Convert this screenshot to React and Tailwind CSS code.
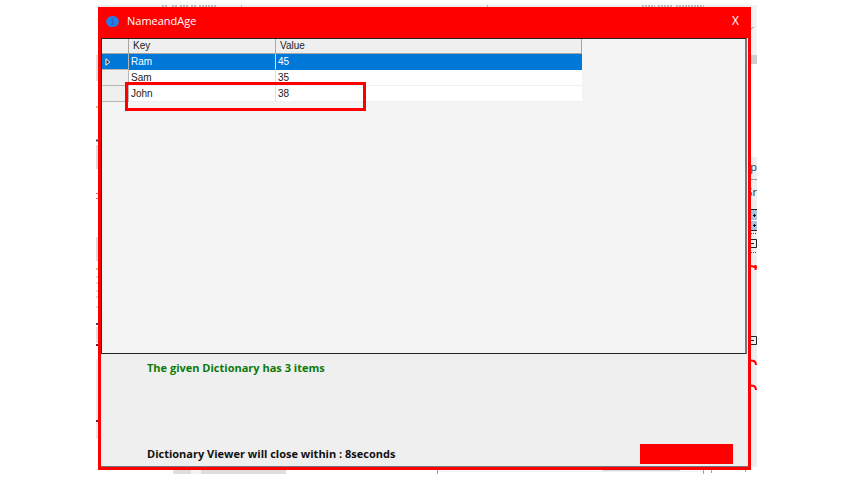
const ENTRIES = [
  { key: 'Ram', value: 45 },
  { key: 'Sam', value: 35 },
  { key: 'John', value: 38 },
]

const SELECTED_KEY = 'Ram'
const SECONDS_LEFT = 8

function InfoIcon() {
  return (
    <svg viewBox="0 0 13 13" className="w-[13px] h-[13px]" aria-hidden="true">
      <ellipse cx="6.5" cy="6.5" rx="6.3" ry="5.6" fill="#1a82ee" />
      <circle cx="6.6" cy="3.6" r="1" fill="#5a50b8" />
      <path d="M5.2 5.8h1.8v3.2M5 9.3h3.400" fill="none" stroke="#4b50b8" strokeWidth="1.300" />
    </svg>
  )
}

// Edges of the editor that stay visible around the viewer window
function EditorBackdrop() {
  return (
    <div className="absolute inset-0 overflow-hidden" aria-hidden="true">
      <svg className="absolute left-0 top-0 w-full h-full">
        <rect x="2" y="0" width="659" height="3" fill="#efefef" />
        <path d="M66 1h6M76 1h5M84 1h8M95 1h5M103 1h17M546 1h13M562 1h15M580 1h28" stroke="#888" strokeWidth="1" strokeDasharray="2 1" />
        <path d="M145.500 0v3M391.500 0v3" stroke="#b5b5b5" />

        <rect x="0" y="50" width="2" height="26" fill="#e2e2e2" />
        <rect x="0" y="140" width="2" height="24" fill="#dedede" />
        <rect x="0" y="232" width="2" height="24" fill="#dedede" />
        <rect x="0" y="322" width="2" height="16" fill="#e2e2e2" />
        <rect x="0" y="354" width="2" height="80" fill="#ececec" />
        <path d="M0 102h2M0 264h2" stroke="#e8b878" strokeWidth="2" />
        <path d="M0 188.500h2M0 193.500h2" stroke="#f06070" />
        <path d="M0 272h2M0 278h2M0 286h2M0 292h2M0 302h2" stroke="#c0b8b8" />
        <path d="M0 135.500h2M0 319h2" stroke="#304878" strokeWidth="2" />
        <path d="M0 340h2M0 416h2" stroke="#801820" strokeWidth="2" />

        <rect x="655" y="0" width="6" height="50" fill="#f3f3f3" />
        <path d="M655 24l3-2" stroke="#999" />
        <rect x="655" y="50" width="6" height="9" fill="#cfcfcf" />
        <rect x="655" y="152" width="6" height="310" fill="#efefef" />
        <path d="M655 174.500h6" stroke="#999" />
        <rect x="655" y="204" width="6" height="22" fill="#a9c3e0" />
        <path d="M655 204.500h6M655 225.500h6" stroke="#222" />
        <path d="M655 215.500h6" stroke="#fff" />
        <path d="M657 210.500h3M658.500 209v3M657 220.500h3M658.500 219v3" stroke="#111" />
        <path d="M655 228.500h6M655 247.500h5" stroke="#555" strokeDasharray="1 1" />
        <path d="M655 234.500h5.500v8H655M655 238.500h3M655 331.500h5.500v8H655M655 335.500h3" fill="none" stroke="#222" />
        <path d="M655 261l6 1.500M659.500 260v5M655 355.500l3 0.500q2 1 2 4M655 380.500l3 0.500q2 1 2 4" fill="none" stroke="#f00" strokeWidth="2" />

        <rect x="77" y="465" width="113" height="4" fill="#dedede" />
        <rect x="95" y="465" width="10" height="4" fill="#f3f3f3" />
        <path d="M342 466.500h265" stroke="#eef1f4" />
        <path d="M506 465.500h78" stroke="#d5d9dc" />
        <path d="M341.500 465v4M607.500 465v4M615.500 465v3M649.500 465v2" stroke="#a0a0b0" />
      </svg>
      <span className="absolute right-0 top-[154px] font-['Open_Sans',sans-serif] text-[11px] leading-4 text-[#333]">p</span>
      <span className="absolute right-0 top-[179px] font-['Open_Sans',sans-serif] text-[11px] leading-4 text-[#333]">Sr</span>
    </div>
  )
}

function TitleBar({ title }) {
  return (
    <header className="flex h-7 items-start justify-between bg-[#ff0000] px-[5px] pt-[3px] text-white">
      <div className="flex items-center gap-2">
        <InfoIcon />
        <h1 className="font-['Open_Sans',sans-serif] text-[11px] leading-4">{title}</h1>
      </div>
      <button type="button" aria-label="Close" className="px-1 font-['Open_Sans',sans-serif] text-[12px] leading-4">
        X
      </button>
    </header>
  )
}

function DictionaryTable() {
  return (
    <table className="w-[74.6%] table-fixed border-separate border-spacing-0 text-left font-['Liberation_Sans',Arial,sans-serif] text-[10px] leading-[15px] text-[#222]">
      <colgroup>
        <col className="w-[27px]" />
        <col className="w-[147px]" />
        <col />
      </colgroup>
      <thead>
        <tr className="bg-[#efefef] leading-[14px]">
          <th className="border-r border-b border-[#a6a6a6] p-0"></th>
          <th className="border-r border-b border-[#a6a6a6] p-0 pl-1 font-normal">Key</th>
          <th className="border-r border-b border-[#a6a6a6] p-0 pl-1 font-normal">Value</th>
        </tr>
      </thead>
      <tbody>
        {ENTRIES.map((entry) => {
          const isSelected = entry.key === SELECTED_KEY
          const cellBorder = isSelected ? 'border-[#0078d7]' : 'border-[#f0f0f0]'

          return (
            <tr key={entry.key} className={isSelected ? 'bg-[#0078d7] text-white' : 'bg-white'}>
              <td className={`border-r border-b border-[#b5b5b5] p-0 ${isSelected ? 'bg-[#0078d7]' : 'bg-[#efefef]'}`}>
                {isSelected && (
                  <svg viewBox="0 0 6 8" className="ml-[3px] h-2 w-[6px]" aria-hidden="true">
                    <path d="M1 0.800L4.800 4L1 7.200Z" fill="#333" stroke="#fff" strokeWidth="1" />
                  </svg>
                )}
              </td>
              <td className={`border-b p-0 pl-[2px] border-r ${cellBorder} border-r-[#d8e4ee]`}>{entry.key}</td>
              <td className={`border-b p-0 pl-[2px] ${cellBorder}`}>{entry.value}</td>
            </tr>
          )
        })}
      </tbody>
    </table>
  )
}

export default function App() {
  return (
    <div className="flex min-h-screen bg-white px-24 pt-[5px] pb-[6px]">
      <div className="relative flex flex-1 pt-[2px] pr-[6px] pb-1 pl-[2px]">
        <EditorBackdrop />

        <main className="relative flex flex-1 flex-col border-[3px] border-[#ff0000] bg-[#efefef]">
          <TitleBar title="NameandAge" />

          <section className="relative mr-px flex-1 border border-r-2 border-[#222] border-r-[#777] bg-[#f4f4f4]">
            <DictionaryTable />
            {/* highlight around the last entry */}
            <div className="absolute left-[23px] top-[43px] h-[29px] w-[241px] border-[3px] border-[#ff0000]"></div>
          </section>

          <footer className="flex h-[113px] flex-col justify-between border-b border-[#777] pt-[6px] pr-[15px] pb-[2px] pl-[46px] font-['Open_Sans',Verdana,sans-serif] text-[11px] leading-4 font-bold">
            <p className="text-[#0b7a0b]">The given Dictionary has {ENTRIES.length} items</p>
            <div className="flex items-center justify-between text-[#111]">
              <p>Dictionary Viewer will close within : {SECONDS_LEFT}seconds</p>
              <div className="h-5 w-[93px] bg-[#ff0000]"></div>
            </div>
          </footer>
        </main>
      </div>
    </div>
  )
}
